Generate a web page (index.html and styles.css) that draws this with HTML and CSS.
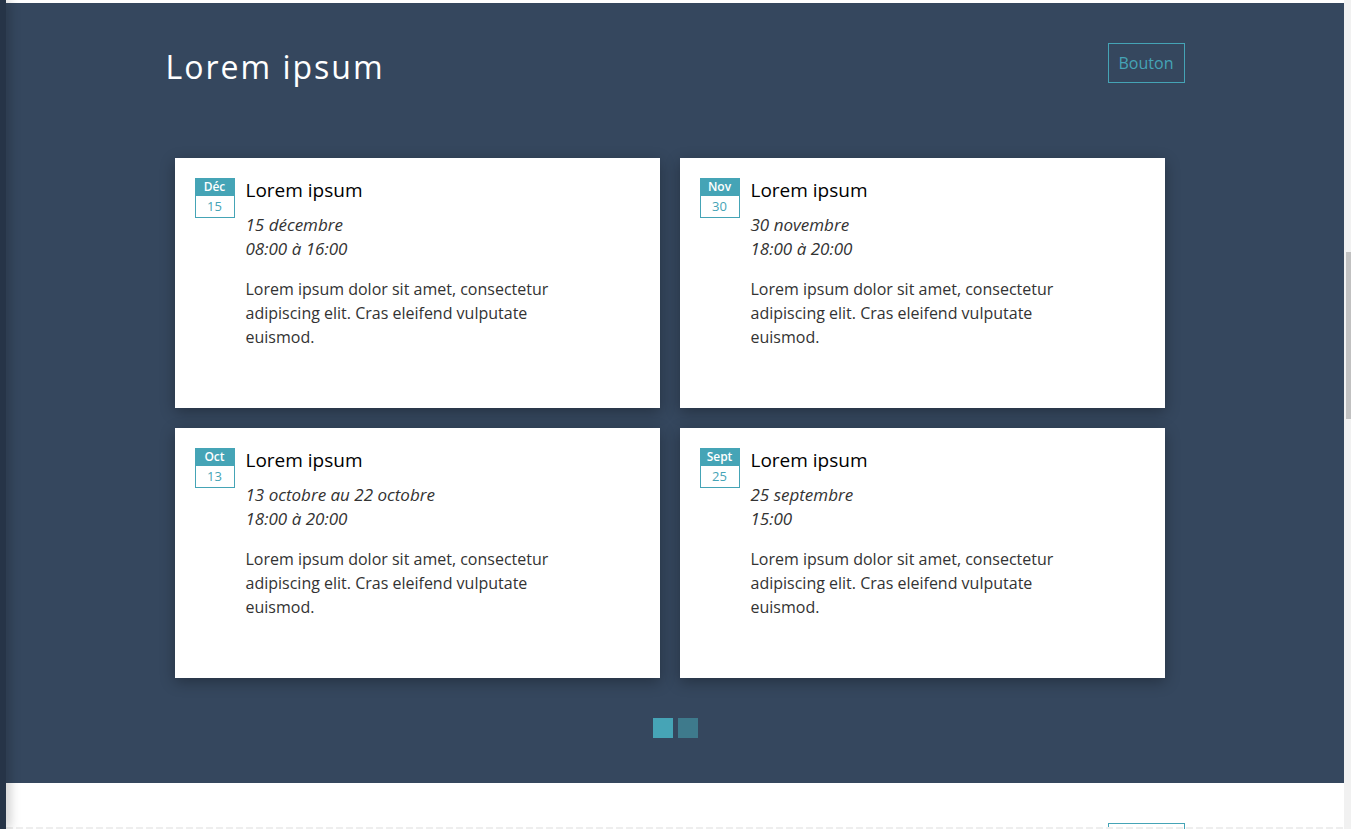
FILE: index.html
```html
<!DOCTYPE html>
<html lang="fr">
<head>
<meta charset="utf-8">
<title>Lorem ipsum</title>
<link rel="stylesheet" href="styles.css">
</head>
<body>
<div class="app">
  <div class="sidebar"></div>
  <div class="main">
    <section class="events">
      <div class="container">
        <header class="section-head">
          <h1 class="section-title">Lorem ipsum</h1>
          <a class="btn" href="#">Bouton</a>
        </header>
        <div class="cards">
          <article class="card">
            <div class="date"><span class="month">Déc</span><span class="day">15</span></div>
            <div class="card-body">
              <h2 class="card-title">Lorem ipsum</h2>
              <p class="when">15 décembre<br>08:00 à 16:00</p>
              <p class="desc">Lorem ipsum dolor sit amet, consectetur adipiscing elit. Cras eleifend vulputate euismod.</p>
            </div>
          </article>
          <article class="card">
            <div class="date"><span class="month">Nov</span><span class="day">30</span></div>
            <div class="card-body">
              <h2 class="card-title">Lorem ipsum</h2>
              <p class="when">30 novembre<br>18:00 à 20:00</p>
              <p class="desc">Lorem ipsum dolor sit amet, consectetur adipiscing elit. Cras eleifend vulputate euismod.</p>
            </div>
          </article>
          <article class="card">
            <div class="date"><span class="month">Oct</span><span class="day">13</span></div>
            <div class="card-body">
              <h2 class="card-title">Lorem ipsum</h2>
              <p class="when">13 octobre au 22 octobre<br>18:00 à 20:00</p>
              <p class="desc">Lorem ipsum dolor sit amet, consectetur adipiscing elit. Cras eleifend vulputate euismod.</p>
            </div>
          </article>
          <article class="card">
            <div class="date"><span class="month">Sept</span><span class="day">25</span></div>
            <div class="card-body">
              <h2 class="card-title">Lorem ipsum</h2>
              <p class="when">25 septembre<br>15:00</p>
              <p class="desc">Lorem ipsum dolor sit amet, consectetur adipiscing elit. Cras eleifend vulputate euismod.</p>
            </div>
          </article>
        </div>
        <div class="pager">
          <span class="dot active"></span>
          <span class="dot"></span>
        </div>
      </div>
    </section>
    <section class="next">
      <div class="container">
        <header class="section-head next-head">
          <span></span>
          <a class="btn" href="#">Bouton</a>
        </header>
      </div>
    </section>
    <div class="dash-line"></div>
  </div>
  <div class="scrollbar"><div class="thumb"></div></div>
</div>
</body>
</html>
```

FILE: styles.css
```css
html, body {
  margin: 0;
  padding: 0;
  height: 100%;
  overflow: hidden;
  background: #ffffff;
  font-family: "Open Sans", "Liberation Sans", sans-serif;
}

.app {
  display: flex;
  height: 829px;
}

.sidebar {
  width: 6px;
  flex: 0 0 6px;
  background: #263447;
  box-shadow: 2px 0 12px rgba(0, 0, 0, 0.35);
  position: relative;
  z-index: 2;
}

.main {
  flex: 1;
  padding-top: 3px;
  position: relative;
  overflow: hidden;
}

.scrollbar {
  flex: 0 0 7px;
  width: 7px;
  background: #f1f1f1;
  padding-top: 252px;
  box-sizing: border-box;
}

.thumb {
  margin-left: 2px;
  width: 5px;
  height: 167px;
  background: #c1c1c1;
}

.events {
  background: #35475e;
  height: 780px;
  box-sizing: border-box;
  padding-top: 40px;
}

.container {
  width: 1019px;
  margin: 0 auto;
}

.section-head {
  display: flex;
  justify-content: space-between;
  align-items: flex-start;
  height: 40px;
}

.section-title {
  margin: 4px 0 0;
  font-size: 32px;
  line-height: 40px;
  font-weight: 400;
  letter-spacing: 2px;
  color: #ffffff;
}

.btn {
  display: inline-flex;
  align-items: center;
  justify-content: center;
  box-sizing: border-box;
  width: 77px;
  height: 40px;
  border: 1px solid #45a4b6;
  color: #45a4b6;
  font-size: 16px;
  text-decoration: none;
}

.cards {
  margin: 75px 0 0 9px;
  width: 990px;
  display: grid;
  grid-template-columns: 485px 485px;
  gap: 20px;
}

.card {
  background: #ffffff;
  height: 250px;
  box-sizing: border-box;
  padding: 20px;
  display: flex;
  box-shadow: 0 4px 14px rgba(0, 0, 0, 0.3);
}

.date {
  flex: 0 0 40px;
  width: 40px;
  display: flex;
  flex-direction: column;
  align-self: flex-start;
  text-align: center;
  margin-right: 11px;
}

.month {
  display: block;
  height: 18px;
  line-height: 18px;
  background: #45a4b6;
  color: #ffffff;
  font-size: 12px;
  font-weight: 600;
}

.day {
  display: block;
  height: 22px;
  line-height: 20px;
  box-sizing: border-box;
  border: 1px solid #45a4b6;
  border-top: none;
  color: #45a4b6;
  font-size: 13px;
}

.card-body {
  flex: 1;
}

.card-title {
  margin: 0;
  font-size: 19px;
  line-height: 24px;
  font-weight: 500;
  color: #000000;
}

.when {
  margin: 11px 0 0;
  font-size: 17px;
  line-height: 24px;
  font-style: italic;
  font-weight: 400;
  color: #333333;
}

.desc {
  margin: 16px 0 0;
  max-width: 330px;
  font-size: 16px;
  line-height: 24px;
  color: #333333;
}

.pager {
  display: flex;
  justify-content: center;
  gap: 5px;
  margin-top: 40px;
}

.dot {
  width: 20px;
  height: 20px;
  background: #3e7a8c;
}

.dot.active {
  background: #46a4b6;
}

.next {
  background: #ffffff;
  padding-top: 40px;
}

.dash-line {
  position: absolute;
  left: 0;
  right: 0;
  bottom: 0;
  height: 2px;
  background: repeating-linear-gradient(90deg, #eeeeee 0 7px, transparent 7px 10px);
}
```
